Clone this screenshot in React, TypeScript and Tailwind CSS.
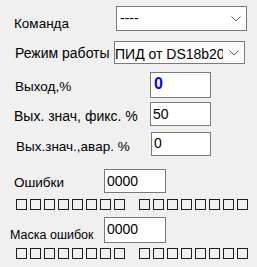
import React from "react";

function Chevron() {
  return (
    <svg width="10" height="6" viewBox="0 0 10 6" className="shrink-0">
      <polyline points="0.5,0.5 5,5 9.5,0.5" fill="none" stroke="#606060" strokeWidth="1" />
    </svg>
  );
}

function Squares() {
  const cells = [0, 1, 2, 3, 4, 5, 6, 7];
  return (
    <div className="flex gap-[3px]">
      {cells.map((i) => (
        <div key={i} className="w-[11px] h-[11px] border border-[#1e1e1e]" />
      ))}
    </div>
  );
}

export default function App() {
  return (
    <div className="w-[257px] h-[267px] overflow-hidden bg-[#f0f0f0] text-black font-['Liberation_Sans',Arial,sans-serif] pt-[6px]">
      {/* Команда */}
      <div className="flex items-start h-[25px]">
        <span className="w-[116px] shrink-0 pl-[14px] mt-[11px] text-[13.5px] leading-none">Команда</span>
        <div className="w-[131px] h-[25px] border border-[#7a7a7a] bg-white flex items-start justify-between pl-[3px] pr-[5px]">
          <span className="text-[14px] leading-none mt-[4px]">----</span>
          <div className="mt-[9px]"><Chevron /></div>
        </div>
      </div>

      {/* Режим работы */}
      <div className="flex items-start h-[23px] mt-[10px]">
        <span className="w-[114px] shrink-0 pl-[15px] mt-[5px] text-[14px] leading-none whitespace-nowrap">Режим работы</span>
        <div className="w-[131px] h-[23px] border border-[#7a7a7a] bg-white flex items-start justify-between pr-[5px] overflow-hidden">
          <span className="w-[108px] overflow-hidden whitespace-nowrap text-[14px] leading-none mt-[5px]">ПИД от DS18b20</span>
          <div className="mt-[8px]"><Chevron /></div>
        </div>
      </div>

      {/* Выход,% */}
      <div className="flex items-start h-[26px] mt-[8px]">
        <span className="w-[150px] shrink-0 pl-[15px] mt-[8px] text-[13.5px] leading-none">Выход,%</span>
        <div className="w-[61px] h-[26px] border border-[#7a7a7a] bg-white pl-[3px] pt-[3px]">
          <span className="block text-[16px] font-bold leading-none text-[#0000ff]">0</span>
        </div>
      </div>

      {/* Вых. знач, фикс. % */}
      <div className="flex items-start h-[24px] mt-[4px]">
        <span className="w-[150px] shrink-0 pl-[14px] mt-[7px] text-[14px] leading-none whitespace-nowrap">Вых. знач, фикс. %</span>
        <div className="w-[61px] h-[24px] border border-[#7a7a7a] bg-white pl-[2px] pt-[4px]">
          <span className="block text-[14px] leading-none">50</span>
        </div>
      </div>

      {/* Вых.знач.,авар. % */}
      <div className="flex items-start h-[24px] mt-[6px]">
        <span className="w-[151px] shrink-0 pl-[16px] mt-[8px] text-[13.5px] leading-none whitespace-nowrap">Вых.знач.,авар. %</span>
        <div className="w-[60px] h-[24px] border border-[#7a7a7a] bg-white pl-[2px] pt-[3px]">
          <span className="block text-[14px] leading-none">0</span>
        </div>
      </div>

      {/* Ошибки */}
      <div className="flex items-start h-[24px] mt-[13px]">
        <span className="w-[104px] shrink-0 pl-[14px] mt-[7px] text-[13.5px] leading-none">Ошибки</span>
        <div className="w-[62px] h-[24px] border border-[#7a7a7a] bg-white pl-[2px] pt-[4px]">
          <span className="block text-[14px] leading-none">0000</span>
        </div>
      </div>

      <div className="flex gap-[14px] pl-[16px] mt-[6px]">
        <Squares />
        <Squares />
      </div>

      {/* Маска ошибок */}
      <div className="flex items-start h-[26px] mt-[7px]">
        <span className="w-[104px] shrink-0 pl-[10px] mt-[12px] text-[12.5px] leading-none whitespace-nowrap">Маска ошибок</span>
        <div className="w-[62px] h-[26px] border border-[#7a7a7a] bg-white pl-[2px] pt-[4px]">
          <span className="block text-[14px] leading-none">0000</span>
        </div>
      </div>

      <div className="flex gap-[14px] pl-[16px] mt-[5px]">
        <Squares />
        <Squares />
      </div>
    </div>
  );
}
